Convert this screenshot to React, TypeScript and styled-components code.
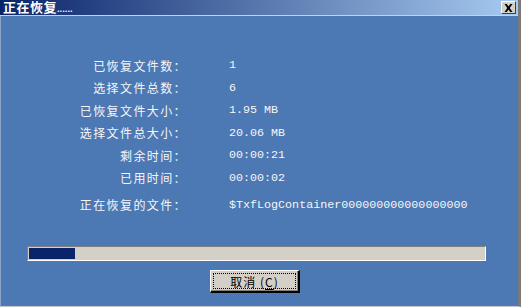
import React from 'react';
import styled, {createGlobalStyle} from 'styled-components';

const GlobalStyle = createGlobalStyle`
  html, body {
    margin: 0;
    padding: 0;
    background: #4c78b4;
  }
  #root {
    width: 521px;
    height: 307px;
  }
`;

const rows = [
  {label: '已恢复文件数：', value: '1'},
  {label: '选择文件总数：', value: '6'},
  {label: '已恢复文件大小：', value: '1.95 MB'},
  {label: '选择文件总大小：', value: '20.06 MB'},
  {label: '剩余时间：', value: '00:00:21'},
  {label: '已用时间：', value: '00:00:02'},
];

const progress = 0.1;

export default function App() {
  return (
    <>
      <GlobalStyle />
      <Window>
        <TitleBar>
          <Title>正在恢复<Dots>......</Dots></Title>
          <CloseButton aria-label='close'>
            <svg width='9' height='8' viewBox='0 0 9 8'>
              <path d='M0.5 0h2.2l1.8 2.6L6.3 0h2.2L5.7 4l2.8 4H6.3L4.5 5.4 2.7 8H0.5l2.8-4z' fill='#000' />
            </svg>
          </CloseButton>
        </TitleBar>
        <Body>
          <InfoGrid>
            {rows.map((row) => (
              <React.Fragment key={row.label}>
                <Label>{row.label}</Label>
                <Value>{row.value}</Value>
              </React.Fragment>
            ))}
            <Label $gap>正在恢复的文件：</Label>
            <Value $gap>$TxfLogContainer000000000000000000</Value>
          </InfoGrid>
          <Footer>
            <ProgressTrack>
              <ProgressFill style={{width: `${progress * 100}%`}} />
            </ProgressTrack>
            <ButtonRow>
              <CancelButton>
                <FocusRing>取消 (<u>C</u>)</FocusRing>
              </CancelButton>
            </ButtonRow>
          </Footer>
        </Body>
      </Window>
    </>
  );
}

const Window = styled.div`
  width: 521px;
  height: 307px;
  box-sizing: border-box;
  display: flex;
  flex-direction: column;
  background: #4c78b4;
  border-left: 1px solid #8aa3c8;
  border-right: 3px solid #7a7a7a;
  border-bottom: 1px solid #c8c8c8;
`;

const TitleBar = styled.div`
  height: 16px;
  box-sizing: border-box;
  flex: none;
  display: flex;
  align-items: center;
  justify-content: space-between;
  padding: 0 2px 0 3px;
  margin-left: -1px;
  background: linear-gradient(to right, #0a246a, #a6caf0);
  border-bottom: 1px solid #d4d0c8;
`;

const Title = styled.div`
  color: #fff;
  font-family: "Noto Sans CJK SC", sans-serif;
  font-weight: bold;
  font-size: 13px;
  line-height: 15px;
  letter-spacing: 0.5px;
  white-space: nowrap;
`;

const Dots = styled.span`
  font-size: 8px;
  letter-spacing: 0;
`;

const CloseButton = styled.div`
  width: 15px;
  height: 13px;
  box-sizing: border-box;
  display: flex;
  align-items: center;
  justify-content: center;
  background: #d4d0c8;
  border-top: 1px solid #fff;
  border-left: 1px solid #fff;
  border-right: 1px solid #404040;
  border-bottom: 1px solid #404040;
`;

const Body = styled.div`
  flex: 1;
  display: flex;
  flex-direction: column;
  padding-top: 38px;
`;

const InfoGrid = styled.div`
  display: grid;
  grid-template-columns: 186px 1fr;
  column-gap: 42px;
  grid-template-rows: repeat(6, 22.5px) 27px;
  align-items: center;
  color: #f6f6f6;
`;

const Label = styled.div<{$gap?: boolean}>`
  text-align: right;
  font-family: "Noto Sans CJK SC", sans-serif;
  font-size: 12px;
  letter-spacing: 1.4px;
  margin-top: ${(p) => (p.$gap ? '4px' : '0')};
`;

const Value = styled.div<{$gap?: boolean}>`
  font-family: "Liberation Mono", monospace;
  font-size: 11.7px;
  margin-top: ${(p) => (p.$gap ? '4px' : '0')};
`;

const Footer = styled.div`
  width: 459px;
  margin: 30px 0 0 26px;
  display: flex;
  flex-direction: column;
  gap: 9px;
`;

const ProgressTrack = styled.div`
  height: 15px;
  box-sizing: border-box;
  padding: 1px;
  background: #d4d0c8;
  border-top: 1px solid #808080;
  border-left: 1px solid #808080;
  border-right: 1px solid #fff;
  border-bottom: 1px solid #fff;
`;

const ProgressFill = styled.div`
  height: 100%;
  background: #0a246a;
`;

const ButtonRow = styled.div`
  display: flex;
  justify-content: center;
  padding-right: 3px;
`;

const CancelButton = styled.div`
  width: 90px;
  height: 23px;
  box-sizing: border-box;
  padding: 2px;
  background: #d4d0c8;
  border-top: 1px solid #fff;
  border-left: 1px solid #fff;
  border-right: 2px solid #000;
  border-bottom: 2px solid #000;
  box-shadow: inset -1px -1px 0 #808080;
`;

const FocusRing = styled.div`
  height: 100%;
  box-sizing: border-box;
  border: 1px dotted #000;
  display: flex;
  align-items: center;
  justify-content: center;
  font-family: "Noto Sans CJK SC", sans-serif;
  font-size: 12px;
  letter-spacing: 1px;
  color: #000;

  u {
    text-underline-offset: 2px;
  }
`;
